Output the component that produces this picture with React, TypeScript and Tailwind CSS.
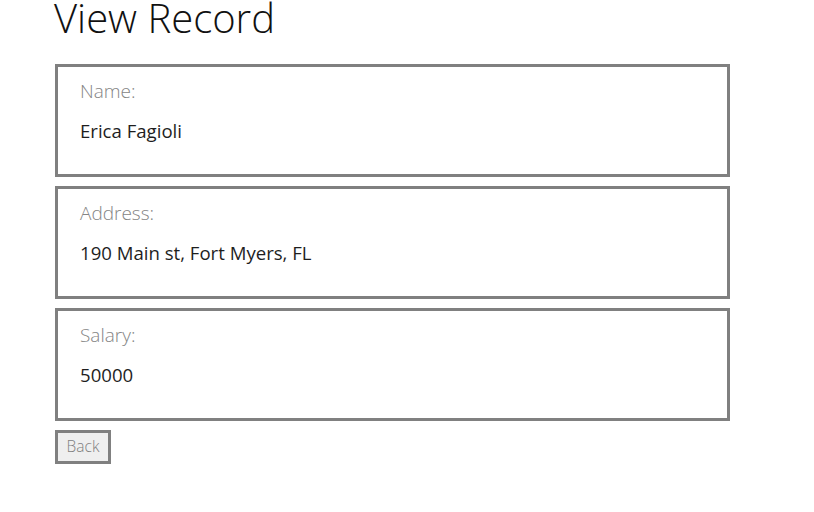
import React from "react";

const fields = [
  { label: "Name:", value: "Erica Fagioli" },
  { label: "Address:", value: "190 Main st, Fort Myers, FL" },
  { label: "Salary:", value: "50000" },
];

export default function App() {
  return (
    <div className="min-h-[512px] bg-white pl-[55px] font-['Open_Sans',sans-serif]">
      <h1 className="h-[36px] text-[40px] leading-[35px] font-light text-[#111] whitespace-nowrap -ml-[1px]">
        View Record
      </h1>
      <div className="mt-[28px] flex flex-col gap-[9px]">
        {fields.map((f) => (
          <div
            key={f.label}
            className="box-border h-[113px] w-[675px] border-[3px] border-solid border-[#808080] pl-[22px] pt-[12px]"
          >
            <div className="text-[19px] leading-[24px] font-light text-[#858585]">{f.label}</div>
            <div className="mt-[16px] text-[18.6px] leading-[24px] font-normal text-[#1e1e1e]">{f.value}</div>
          </div>
        ))}
      </div>
      <button
        type="button"
        className="mt-[9px] box-border flex h-[34px] w-[56px] items-center justify-center border-[3px] border-solid border-[#808080] bg-[#efefef] px-0 text-[15.5px] font-light text-[#808080] leading-none"
      >
        Back
      </button>
    </div>
  );
}
